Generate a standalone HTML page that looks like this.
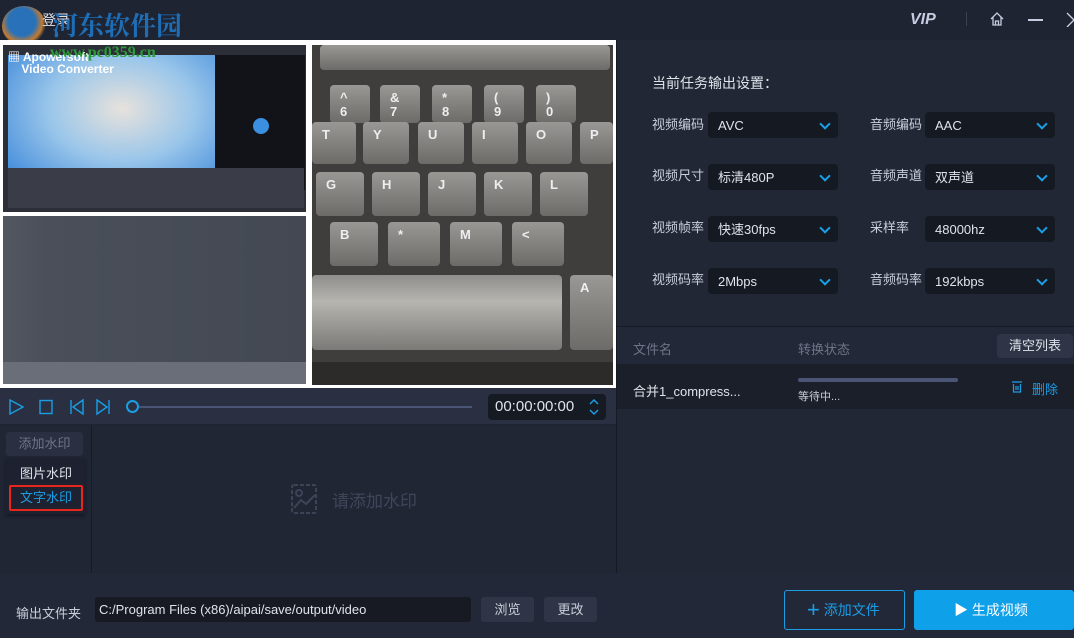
<!DOCTYPE html>
<html><head><meta charset="utf-8"><style>
*{margin:0;padding:0;box-sizing:border-box}
body{width:1074px;height:638px;overflow:hidden;background:#1f2433;font-family:"Liberation Sans","Noto Sans CJK SC",sans-serif;font-size:13px;color:#c9ced9;position:relative}
.a{position:absolute}
.sel{position:absolute;width:130px;height:26px;background:#151922;border-radius:4px;color:#dfe3ea;font-size:13px;line-height:27px;padding-left:10px}
.sel:after{content:"";position:absolute;right:9px;top:8px;width:6px;height:6px;border-right:2px solid #1aa0e8;border-bottom:2px solid #1aa0e8;transform:rotate(45deg)}
.lab{position:absolute;font-size:13px;color:#c9ced9;line-height:16px}
.key{position:absolute;background:linear-gradient(#9a9894,#6d6b68);border-radius:4px;color:#eee;font-weight:bold;font-size:13px;line-height:14px;padding:6px 10px;overflow:hidden}
</style></head><body>
<!-- title bar -->
<div class="a" style="left:0;top:0;width:1074px;height:39px;background:#1f2433"></div>
<div class="a" style="left:2px;top:6px;width:44px;height:40px;border-radius:50%;background:radial-gradient(circle at 45% 40%,#2a7fd0 0 40%,#e08a30 60%,transparent 72%);opacity:.85"></div>
<div class="a" style="left:42px;top:10px;font-size:14px;color:#dfe3ea">登录</div>
<div class="a" style="left:52px;top:6px;font-size:26px;font-weight:bold;color:#1e6db5;font-family:'Noto Serif CJK SC',serif">河东软件园</div>
<div class="a" style="left:910px;top:11px;font-size:16px;font-weight:bold;font-style:italic;color:#c7cde0">VIP</div>
<div class="a" style="left:966px;top:12px;width:1px;height:14px;background:#3c4254"></div>
<svg class="a" style="left:989px;top:11px" width="16" height="16" viewBox="0 0 16 16"><path d="M2 8 L8 2 L14 8 M4 6.5 V14 H12 V6.5 M6.5 14 V10 H9.5 V14" fill="none" stroke="#c7cde0" stroke-width="1.3"/></svg>
<div class="a" style="left:1028px;top:19px;width:15px;height:1.5px;background:#c7cde0"></div>
<svg class="a" style="left:1066px;top:11px" width="10" height="16"><path d="M1 2 L8 9 L1 16" fill="none" stroke="#c7cde0" stroke-width="1.4"/></svg>
<!-- video -->
<div class="a" style="left:0;top:40px;width:616px;height:348px;background:#fff"></div>
<div class="a" style="left:3px;top:45px;width:306px;height:167px;background:#2c2f38"></div>
<div class="a" style="left:8px;top:55px;width:207px;height:135px;background:radial-gradient(ellipse at 55% 40%,#e7e2dc 0,#9ac6ea 45%,#2f7fd8 100%)"></div>
<div class="a" style="left:215px;top:55px;width:90px;height:135px;background:#121318"></div>
<div class="a" style="left:253px;top:118px;width:16px;height:16px;border-radius:50%;background:#3b8fe0"></div>
<div class="a" style="left:8px;top:168px;width:296px;height:40px;background:#3a3d47"></div>
<div class="a" style="left:8px;top:51px;color:#fff;font-size:12px;line-height:12px;font-weight:bold">▦ Apowersoft<br>&nbsp;&nbsp;&nbsp;&nbsp;Video Converter</div>
<div class="a" style="left:50px;top:44px;color:#2e9a3a;font-size:16px;font-weight:bold;font-family:'Liberation Serif',serif">www.pc0359.cn</div>
<div class="a" style="left:3px;top:216px;width:303px;height:168px;background:linear-gradient(90deg,#525760 0,#4a4f5a 15%,#434852 100%)"></div>
<div class="a" style="left:3px;top:362px;width:303px;height:22px;background:#6a6e78"></div>
<div class="a" style="left:312px;top:45px;width:301px;height:340px;background:#3f3e3c"></div>
<div class="key" style="left:320px;top:45px;width:290px;height:25px"></div>
<div class="key" style="left:330px;top:85px;width:40px;height:38px">^<br>6</div>
<div class="key" style="left:380px;top:85px;width:40px;height:38px">&amp;<br>7</div>
<div class="key" style="left:432px;top:85px;width:40px;height:38px">*<br>8</div>
<div class="key" style="left:484px;top:85px;width:40px;height:38px">(<br>9</div>
<div class="key" style="left:536px;top:85px;width:40px;height:38px">)<br>0</div>
<div class="key" style="left:312px;top:122px;width:44px;height:42px">T</div>
<div class="key" style="left:363px;top:122px;width:46px;height:42px">Y</div>
<div class="key" style="left:418px;top:122px;width:46px;height:42px">U</div>
<div class="key" style="left:472px;top:122px;width:46px;height:42px">I</div>
<div class="key" style="left:526px;top:122px;width:46px;height:42px">O</div>
<div class="key" style="left:580px;top:122px;width:33px;height:42px">P</div>
<div class="key" style="left:316px;top:172px;width:48px;height:44px">G</div>
<div class="key" style="left:372px;top:172px;width:48px;height:44px">H</div>
<div class="key" style="left:428px;top:172px;width:48px;height:44px">J</div>
<div class="key" style="left:484px;top:172px;width:48px;height:44px">K</div>
<div class="key" style="left:540px;top:172px;width:48px;height:44px">L</div>
<div class="key" style="left:330px;top:222px;width:48px;height:44px">B</div>
<div class="key" style="left:388px;top:222px;width:52px;height:44px">*</div>
<div class="key" style="left:450px;top:222px;width:52px;height:44px">M</div>
<div class="key" style="left:512px;top:222px;width:52px;height:44px">&lt;</div>
<div class="key" style="left:312px;top:275px;width:250px;height:75px;background:linear-gradient(#8e8d8a,#b7b5b0 35%,#7c7a76)"></div>
<div class="key" style="left:570px;top:275px;width:43px;height:75px">A</div>
<div class="a" style="left:312px;top:362px;width:301px;height:23px;background:#2c2b29"></div>
<div class="a" style="left:0;top:212px;width:310px;height:3px;background:#fff"></div>
<div class="a" style="left:306px;top:42px;width:6px;height:344px;background:#fff"></div>
<!-- controls -->
<div class="a" style="left:0;top:388px;width:616px;height:36px;background:#2a3042"></div>
<svg class="a" style="left:8px;top:398px" width="110" height="18"><g fill="none" stroke="#1a9ee6" stroke-width="1.4"><path d="M2 2 L15 9 L2 16 Z"/><rect x="32" y="2.5" width="12" height="13"/><path d="M63 2 V16 M75 2 L65 9 L75 16 Z"/><path d="M89 2 L99 9 L89 16 Z M101 2 V16"/></g></svg>
<div class="a" style="left:126px;top:400px;width:13px;height:13px;border:2px solid #1a9ee6;border-radius:50%"></div>
<div class="a" style="left:139px;top:406px;width:333px;height:2px;background:#4a5475"></div>
<div class="a" style="left:488px;top:394px;width:118px;height:26px;background:#161a23;border-radius:4px;color:#dfe3ea;font-size:15px;line-height:26px;padding-left:7px">00:00:00:00</div>
<svg class="a" style="left:588px;top:398px" width="12" height="18"><path d="M2 6 L6 2 L10 6 M2 12 L6 16 L10 12" fill="none" stroke="#1a9ee6" stroke-width="1.5"/></svg>
<!-- watermark -->
<div class="a" style="left:0;top:425px;width:616px;height:148px;background:#212635"></div>
<div class="a" style="left:91px;top:425px;width:1px;height:148px;background:#161a23"></div>
<div class="a" style="left:6px;top:432px;width:77px;height:24px;background:#2a3042;border-radius:3px;color:#6e7587;text-align:center;line-height:24px">添加水印</div>
<div class="a" style="left:6px;top:458px;width:79px;height:56px;background:#1e2230;box-shadow:0 2px 4px rgba(0,0,0,.4)"></div>
<div class="a" style="left:20px;top:463px;color:#dfe3ea">图片水印</div>
<div class="a" style="left:9px;top:485px;width:74px;height:26px;border:2px solid #e8261c;border-radius:2px;color:#1a9ee6;line-height:22px;padding-left:9px">文字水印</div>
<svg class="a" style="left:291px;top:484px" width="30" height="30"><g fill="none" stroke="#3c4457" stroke-width="2" stroke-dasharray="4 2"><rect x="1" y="1" width="24" height="28" rx="2"/></g><circle cx="8" cy="9" r="3" fill="none" stroke="#3c4457" stroke-width="2"/><path d="M3 24 L10 16 L15 20 L24 11" fill="none" stroke="#3c4457" stroke-width="2"/></svg>
<div class="a" style="left:332px;top:487px;font-size:17px;color:#3f4659">请添加水印</div>
<!-- right panel -->
<div class="a" style="left:616px;top:40px;width:1px;height:533px;background:#161a23"></div>
<div class="a" style="left:617px;top:40px;width:457px;height:533px;background:#222736"></div>
<div class="a" style="left:652px;top:73px;font-size:14px;color:#dfe3ea">当前任务输出设置：</div>
<div class="lab" style="left:652px;top:117px">视频编码</div><div class="sel" style="left:708px;top:112px">AVC</div>
<div class="lab" style="left:870px;top:117px">音频编码</div><div class="sel" style="left:925px;top:112px">AAC</div>
<div class="lab" style="left:652px;top:168px">视频尺寸</div><div class="sel" style="left:708px;top:164px">标清480P</div>
<div class="lab" style="left:870px;top:168px">音频声道</div><div class="sel" style="left:925px;top:164px">双声道</div>
<div class="lab" style="left:652px;top:220px">视频帧率</div><div class="sel" style="left:708px;top:216px">快速30fps</div>
<div class="lab" style="left:870px;top:220px">采样率</div><div class="sel" style="left:925px;top:216px">48000hz</div>
<div class="lab" style="left:652px;top:272px">视频码率</div><div class="sel" style="left:708px;top:268px">2Mbps</div>
<div class="lab" style="left:870px;top:272px">音频码率</div><div class="sel" style="left:925px;top:268px">192kbps</div>
<div class="a" style="left:617px;top:326px;width:457px;height:1px;background:#161a23"></div>
<div class="a" style="left:617px;top:327px;width:457px;height:37px;background:#232838"></div>
<div class="a" style="left:633px;top:339px;color:#6e7587">文件名</div>
<div class="a" style="left:798px;top:339px;color:#6e7587">转换状态</div>
<div class="a" style="left:997px;top:334px;width:76px;height:24px;background:#2f3546;border-radius:4px;color:#dfe3ea;line-height:24px;text-align:center">清空列表</div>
<div class="a" style="left:617px;top:364px;width:457px;height:45px;background:#1b1f2a"></div>
<div class="a" style="left:633px;top:381px;color:#dfe3ea">合并1_compress...</div>
<div class="a" style="left:798px;top:378px;width:160px;height:4px;border-radius:2px;background:#4a5475"></div>
<div class="a" style="left:798px;top:388px;font-size:11px;color:#c9ced9">等待中...</div>
<svg class="a" style="left:1011px;top:380px" width="12" height="13"><path d="M1 2 H11 M2.5 4 V12 H9.5 V4 M5 6 V10 M7 6 V10" fill="none" stroke="#1a9ee6" stroke-width="1.2"/></svg>
<div class="a" style="left:1032px;top:379px;color:#1a9ee6">删除</div>
<!-- bottom -->
<div class="a" style="left:0;top:573px;width:1074px;height:65px;background:#232838"></div>
<div class="a" style="left:16px;top:603px;color:#c9ced9">输出文件夹</div>
<div class="a" style="left:95px;top:597px;width:376px;height:25px;background:#171a23;border-radius:3px;color:#dfe3ea;line-height:25px;padding-left:4px;font-size:13px">C:/Program Files (x86)/aipai/save/output/video</div>
<div class="a" style="left:481px;top:597px;width:53px;height:25px;background:#2f3546;border-radius:3px;color:#c9ced9;line-height:25px;text-align:center">浏览</div>
<div class="a" style="left:544px;top:597px;width:53px;height:25px;background:#2f3546;border-radius:3px;color:#c9ced9;line-height:25px;text-align:center">更改</div>
<div class="a" style="left:784px;top:590px;width:121px;height:40px;border:1px solid #1a9ee6;border-radius:3px;color:#1a9ee6;font-size:14px;line-height:38px;padding-left:22px"><span style="font-size:22px;vertical-align:-2px">+</span> 添加文件</div>
<div class="a" style="left:914px;top:590px;width:160px;height:40px;background:#0fa0ea;border-radius:3px;color:#fff;font-size:14px;line-height:40px;padding-left:40px"><span style="font-size:14px">▶</span> 生成视频</div>
</body></html>
